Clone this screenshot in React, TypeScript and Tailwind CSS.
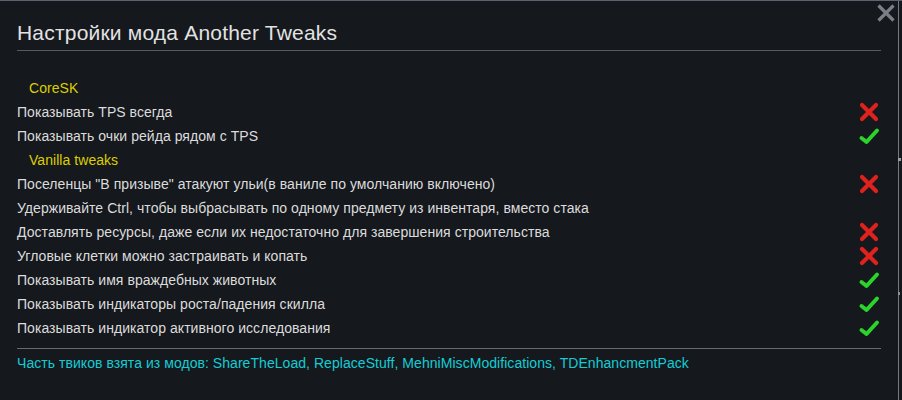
import React from "react";

const Cross = () => (
  <svg width="22" height="22" viewBox="0 0 22 22">
    <path d="M4 4 L18 18 M18 4 L4 18" stroke="#e0221e" strokeWidth="4.2" strokeLinecap="round" />
  </svg>
);

const Check = () => (
  <svg width="22" height="22" viewBox="0 0 22 22">
    <path d="M3.5 13 L8.5 17 L19 5.5" stroke="#2ad42a" strokeWidth="4" strokeLinecap="round" strokeLinejoin="round" fill="none" />
  </svg>
);

type Row = { kind: "header"; text: string } | { kind: "opt"; text: string; v: boolean | null };

const rows: Row[] = [
  { kind: "header", text: "CoreSK" },
  { kind: "opt", text: "Показывать TPS всегда", v: false },
  { kind: "opt", text: "Показывать очки рейда рядом с TPS", v: true },
  { kind: "header", text: "Vanilla tweaks" },
  { kind: "opt", text: "Поселенцы \"В призыве\" атакуют ульи(в ваниле по умолчанию включено)", v: false },
  { kind: "opt", text: "Удерживайте Ctrl, чтобы выбрасывать по одному предмету из инвентаря, вместо стака", v: null },
  { kind: "opt", text: "Доставлять ресурсы, даже если их недостаточно для завершения строительства", v: false },
  { kind: "opt", text: "Угловые клетки можно застраивать и копать", v: false },
  { kind: "opt", text: "Показывать имя враждебных животных", v: true },
  { kind: "opt", text: "Показывать индикаторы роста/падения скилла", v: true },
  { kind: "opt", text: "Показывать индикатор активного исследования", v: true },
];

export default function App() {
  return (
    <div
      className="relative w-[902px] h-[400px] bg-[#15181d] border-t border-t-[#5b6270] overflow-hidden"
      style={{ fontFamily: '"Liberation Sans", Arial, sans-serif' }}
    >
      <div className="absolute right-[3px] top-0 bottom-0 w-px bg-[#737a86]" />
      <div className="absolute right-[1px] top-[157px] w-[3px] h-[3px] bg-[#9aa0a8]" />
      <div className="absolute right-[2px] top-[291px] w-[2px] h-[3px] bg-[#8a9098]" />
      <div className="absolute right-[6px] top-[2px]">
        <svg width="20" height="20" viewBox="0 0 20 20">
          <path d="M2.5 2.5 L17.5 17.5 M17.5 2.5 L2.5 17.5" stroke="#7b7f86" strokeWidth="3.2" />
        </svg>
      </div>
      <div className="pl-[17px] pr-[21px] pt-[19px]">
        <div className="text-[21px] tracking-[0.2px] leading-[26px] text-[#e2e2e2]">Настройки мода Another Tweaks</div>
        <div className="mt-[4px] h-px bg-[#5a5a5a]" />
        <div className="mt-[25px] flex flex-col text-[14px] tracking-[0.05px]">
          {rows.map((r, i) =>
            r.kind === "header" ? (
              <div key={i} className="h-[24px] flex items-center pl-[12px] text-[#dccf00]">
                {r.text}
              </div>
            ) : (
              <div key={i} className="h-[24px] flex items-center justify-between text-[#dcdcdc]">
                <span>{r.text}</span>
                <span className="w-[22px] h-[22px] mr-[1px]">{r.v === true ? <Check /> : r.v === false ? <Cross /> : null}</span>
              </div>
            )
          )}
        </div>
        <div className="mt-[8px] h-px bg-[#6a6a6a]" />
        <div className="mt-[6px] text-[14px] tracking-[0.05px] leading-[16px] text-[#14cdd4]">
          Часть твиков взята из модов: ShareTheLoad, ReplaceStuff, MehniMiscModifications, TDEnhancmentPack
        </div>
      </div>
    </div>
  );
}
